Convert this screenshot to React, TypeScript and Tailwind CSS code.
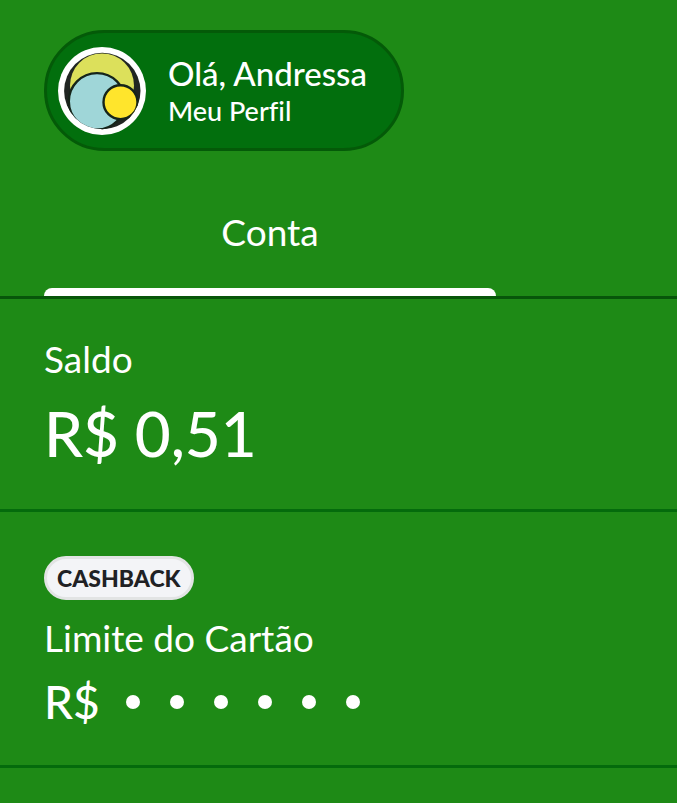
import type { ReactNode } from 'react'

const HIDDEN_DIGITS = 6

function Avatar() {
  return (
    <svg viewBox="0 0 88 88" className="size-[88px] shrink-0" aria-hidden="true">
      <defs>
        <clipPath id="avatar-face">
          <circle cx="44.3" cy="44" r="38.2" />
        </clipPath>
      </defs>
      <circle cx="44" cy="44" r="44" fill="#fff" />
      <g clipPath="url(#avatar-face)">
        <rect width="88" height="88" fill="#202522" />
        <circle cx="44" cy="38.4" r="32" fill="#dce05b" />
        <circle cx="39" cy="54.3" r="28.2" fill="#9fd6d8" stroke="#16241a" strokeWidth="2.4" />
        <circle cx="62.5" cy="55.2" r="17" fill="#ffe52c" stroke="#16241a" strokeWidth="2.4" />
      </g>
    </svg>
  )
}

function Section({ children }: { children: ReactNode }) {
  return <section className="border-b-3 border-[#046b0c] px-11 pt-10">{children}</section>
}

export default function App() {
  return (
    <div className="min-h-screen bg-[#1e8a16] font-['Lato',sans-serif] text-white [font-variant-ligatures:none]">
      <header className="px-11 pt-[30px]">
        <button className="flex h-[121px] items-center gap-[22px] rounded-full border-3 border-[#045a08] bg-[#026f0d] pr-[34px] pl-[11px] text-left">
          <Avatar />
          <span className="flex flex-col">
            <span className="text-[33px] leading-10 font-medium">Olá, Andressa</span>
            <span className="text-[27px] leading-9 font-medium">Meu Perfil</span>
          </span>
        </button>
      </header>

      <nav className="flex border-b-3 border-[#07560a] px-11 pt-[53px]">
        <button className="flex w-[452px] flex-col items-center gap-7 text-[37px] leading-14">
          Conta
          <span className="h-2 w-full rounded-t-lg bg-white" />
        </button>
      </nav>

      <Section>
        <h2 className="text-[37px] leading-10">Saldo</h2>
        <p className="pt-[18px] pb-10 text-[62px] leading-[72px] font-medium">R$ 0,51</p>
      </Section>

      <Section>
        <span className="mt-1 flex h-11 w-fit items-center rounded-full border-3 border-[#e2e4e4] bg-[#f3f4f7] px-2.5 text-[23px] font-black text-[#202124]">
          CASHBACK
        </span>
        <h2 className="pt-[18px] text-[37px] leading-10">Limite do Cartão</h2>
        <p className="flex items-center gap-[26px] pt-[18px] pb-[37px] text-[46px] leading-[52px] font-medium">
          R$
          <span className="flex gap-[30px]" role="img" aria-label="Valor oculto">
            {Array.from({ length: HIDDEN_DIGITS }, (_, i) => (
              <span key={i} className="size-3.5 rounded-full bg-white" />
            ))}
          </span>
        </p>
      </Section>
    </div>
  )
}
